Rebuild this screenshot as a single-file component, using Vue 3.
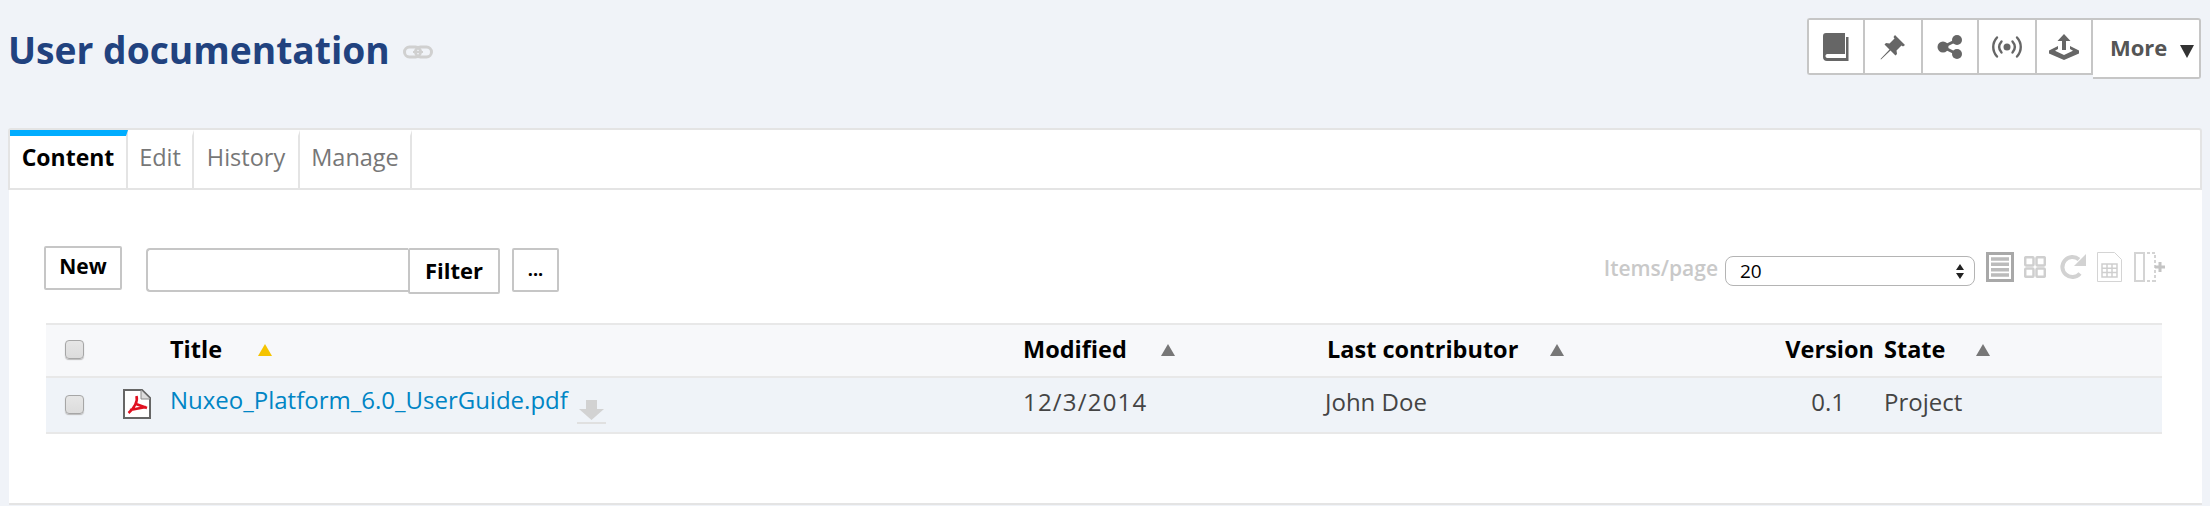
<template>
  <div class="page">
    <header class="doc-header">
      <h1 class="doc-title">
        User documentation
        <svg class="link-icon" viewBox="0 0 30 14" width="30" height="14">
          <rect x="1.5" y="2" width="16" height="10" rx="5" fill="none" stroke="#d0d0d0" stroke-width="3" />
          <rect x="12.5" y="2" width="16" height="10" rx="5" fill="none" stroke="#d0d0d0" stroke-width="3" />
          <rect x="10" y="6" width="10" height="2" fill="#d0d0d0" />
        </svg>
      </h1>
      <div class="actions">
        <div class="action-group">
          <button class="action-btn">
            <svg viewBox="0 0 26 28" width="26" height="28">
              <path fill="#666" d="M3 0h19v21H5c-1.500 0-2.500.6-2.500 2s1 2 2.500 2h18V4h2.500v24H4c-2.500 0-4-1.500-4-4V3c0-2 1-3 3-3z" />
            </svg>
          </button>
          <button class="action-btn">
            <svg viewBox="0 0 26 26" width="26" height="26">
              <path fill="#666" d="M15 1l10 10-2 1.500-1.500-1-5 5 .5 3.500-1.500 1.500-5-5-9.500 9-.5-.5 9-9.500-5-5L6 9l3.500.5 5-5-1-1.500z" />
            </svg>
          </button>
          <button class="action-btn">
            <svg viewBox="0 0 26 26" width="26" height="26">
              <path d="M20 6L6 13l14 7" fill="none" stroke="#666" stroke-width="3" />
              <circle cx="20" cy="6" r="5" fill="#666" />
              <circle cx="6" cy="13" r="5.500" fill="#666" />
              <circle cx="20" cy="20" r="5" fill="#666" />
            </svg>
          </button>
          <button class="action-btn">
            <svg viewBox="0 0 30 24" width="30" height="24">
              <circle cx="15" cy="12" r="3.500" fill="#666" />
              <path d="M9.500 6.500c-3 3.500-3 7.500 0 11M20.500 6.500c3 3.500 3 7.500 0 11M5 2.500c-5 5.500-5 13.500 0 19M25 2.500c5 5.500 5 13.500 0 19" fill="none" stroke="#666" stroke-width="2.400" stroke-linecap="round" />
            </svg>
          </button>
          <button class="action-btn">
            <svg viewBox="0 0 30 26" width="30" height="26">
              <path fill="#666" d="M15 0l6.500 7H17v9h-4V7H8.500z" />
              <path fill="#666" d="M9 12v3L6 16.800 15 21l9-4.200L21 15v-3l9 4.500V19.500L15 26 0 19.500v-3z" />
            </svg>
          </button>
        </div>
        <button class="more-btn">
          More
          <svg viewBox="0 0 14 13" width="14" height="13">
            <path d="M0 0h14L7 13z" fill="#333" />
          </svg>
        </button>
      </div>
    </header>

    <nav class="tabs">
      <a
        v-for="tab in tabs"
        :key="tab.label"
        class="tab"
        :class="{ active: tab.active }"
        :style="{ width: tab.width + 'px' }"
      >{{ tab.label }}</a>
    </nav>

    <main class="panel">
      <div class="toolbar">
        <div class="toolbar-left">
          <button class="btn btn-new">New</button>
          <div class="filter">
            <div class="filter-input"></div>
            <button class="btn btn-filter">Filter</button>
          </div>
          <button class="btn btn-more">...</button>
        </div>
        <div class="toolbar-right">
          <span class="items-label">Items/page</span>
          <div class="page-select">
            <span>20</span>
            <svg viewBox="0 0 8 15" width="8" height="15">
              <path d="M4 0l4 6H0zM4 15L0 9h8z" fill="#222" />
            </svg>
          </div>
          <div class="view-icons">
            <svg viewBox="0 0 28 30" width="28" height="30">
              <rect x="1.500" y="1.500" width="25" height="27" fill="#fff" stroke="#a8a8a8" stroke-width="3" />
              <path d="M5 7h18M5 12.300h18M5 17.700h18M5 23h18" stroke="#bbb" stroke-width="3.600" />
            </svg>
            <svg viewBox="0 0 22 22" width="22" height="22">
              <g fill="none" stroke="#cfcfcf" stroke-width="2.500">
                <rect x="1.200" y="1.200" width="8.300" height="8.300" rx="1" />
                <rect x="12.500" y="1.200" width="8.300" height="8.300" rx="1" />
                <rect x="1.200" y="12.500" width="8.300" height="8.300" rx="1" />
                <rect x="12.500" y="12.500" width="8.300" height="8.300" rx="1" />
              </g>
            </svg>
            <svg viewBox="0 0 26 26" width="26" height="26">
              <path d="M20 19.500A10 10 0 1 1 19 5.500" fill="none" stroke="#d2d2d2" stroke-width="4" />
              <path d="M26 0v12H14z" fill="#d2d2d2" />
            </svg>
            <svg viewBox="0 0 25 30" width="25" height="30">
              <path d="M.5.5h17l7 7v22H.500z" fill="#fff" stroke="#d4d4d4" />
              <path d="M5 12h15v13H5zM5 16.300h15M5 20.600h15M10 12v13M15 12v13" fill="none" stroke="#cfcfcf" stroke-width="1.500" />
            </svg>
            <svg viewBox="0 0 31 30" width="31" height="30">
              <rect x="1" y="1" width="9" height="28" fill="none" stroke="#d4d4d4" stroke-width="2" />
              <path d="M13 1h8v29M13 29h8" fill="none" stroke="#d4d4d4" stroke-width="2" stroke-dasharray="3 2" />
              <path d="M21 13.500h3.500V10h3v3.500H31v3h-3.500V20h-3v-3.500H21z" fill="#c4c4c4" />
            </svg>
          </div>
        </div>
      </div>

      <table class="doc-table">
        <colgroup>
          <col style="width: 76px" />
          <col style="width: 48px" />
          <col style="width: 853px" />
          <col style="width: 304px" />
          <col style="width: 456px" />
          <col style="width: 101px" />
          <col />
        </colgroup>
        <thead>
          <tr>
            <th class="check-cell"><span class="checkbox"></span></th>
            <th></th>
            <th>Title<span class="sort sort-on"></span></th>
            <th>Modified<span class="sort"></span></th>
            <th>Last contributor<span class="sort sort-last"></span></th>
            <th class="version">Version</th>
            <th>State<span class="sort sort-state"></span></th>
          </tr>
        </thead>
        <tbody>
          <tr v-for="doc in docs" :key="doc.title">
            <td class="check-cell"><span class="checkbox"></span></td>
            <td class="icon-cell">
              <svg viewBox="0 0 28 30" width="28" height="30">
                <path d="M1 1h18l8 8v20H1z" fill="#fff" stroke="#666" stroke-width="2" />
                <path d="M18 1v9h9" fill="#ddd" stroke="#888" />
                <path d="M13.500 7c1.500 5-2 12-8 17M13 15l11 4M7 21l16-3" fill="none" stroke="#e01020" stroke-width="2.600" />
              </svg>
            </td>
            <td class="title-cell">
              <a class="doc-link">{{ doc.title }}</a>
              <svg class="download" viewBox="0 0 29 24" width="29" height="24">
                <path d="M9 0h11v9h7L14.500 20 2 9h7z" fill="#d2d2d2" />
                <rect y="22" width="29" height="2" fill="#e0e0e0" />
              </svg>
            </td>
            <td class="date">{{ doc.modified }}</td>
            <td class="contributor">{{ doc.contributor }}</td>
            <td class="version version-value">{{ doc.version }}</td>
            <td>{{ doc.state }}</td>
          </tr>
        </tbody>
      </table>
    </main>
  </div>
</template>

<script setup>
const tabs = [
  { label: 'Content', width: 118, active: true },
  { label: 'Edit', width: 66 },
  { label: 'History', width: 106 },
  { label: 'Manage', width: 112 }
]

const docs = [
  {
    title: 'Nuxeo_Platform_6.0_UserGuide.pdf',
    modified: '12/3/2014',
    contributor: 'John Doe',
    version: '0.1',
    state: 'Project'
  }
]
</script>

<style>
html,
body {
  margin: 0;
  background: #f0f3f8;
}
</style>

<style scoped>
.page {
  width: 2210px;
  height: 506px;
  padding: 0 8px;
  box-sizing: border-box;
  overflow: hidden;
  font-family: "Open Sans", "Liberation Sans", sans-serif;
  color: #444;
}

.doc-header {
  display: flex;
  justify-content: space-between;
  align-items: flex-start;
  height: 128px;
  padding-top: 18px;
  box-sizing: border-box;
}

.doc-title {
  display: flex;
  align-items: center;
  gap: 13px;
  margin: 8px 0 0;
  font-size: 37.2px;
  line-height: 48px;
  font-weight: 700;
  color: #21427f;
}

.link-icon {
  margin-top: 4px;
}

.actions {
  display: flex;
  align-items: flex-start;
  margin-right: 1px;
}

.action-group {
  display: grid;
  grid-template-columns: 56px 58px 56px 58px 56px;
  height: 57px;
  box-sizing: border-box;
  border: 2px solid #c6c6c6;
  border-right: 0;
  border-radius: 3px 0 0 3px;
  background: #fff;
}

.action-btn {
  display: flex;
  align-items: center;
  justify-content: center;
  padding: 0;
  border: 0;
  border-right: 2px solid #c6c6c6;
  background: #fff;
}

.more-btn {
  display: flex;
  align-items: flex-start;
  gap: 13px;
  width: 108px;
  height: 61px;
  padding: 12px 0 0 17px;
  box-sizing: border-box;
  border: 2px solid #c6c6c6;
  border-width: 2px 2px 2px 0;
  border-radius: 0 3px 3px 0;
  background: #fff;
  font: 700 22px/30px "Open Sans", sans-serif;
  color: #555;
}

.more-btn svg {
  margin-top: 13px;
}

.tabs {
  display: flex;
  height: 62px;
  box-sizing: border-box;
  border: 2px solid #e4e4e4;
  border-radius: 3px 3px 0 0;
  background: #fff;
}

.tab {
  box-sizing: border-box;
  padding-top: 4px;
  border-right: 2px solid #e4e4e4;
  border-top: 6px solid transparent;
  font-size: 23.5px;
  line-height: 34px;
  text-align: center;
  color: #777;
}

.tab.active {
  border-top-color: #00adff;
  font-size: 23px;
  font-weight: 700;
  color: #000;
}

.panel {
  height: 315px;
  margin-left: 1px;
  padding: 56px 38px 0 37px;
  box-sizing: border-box;
  background: #fff;
  border-bottom: 2px solid #e4e4e4;
}

.toolbar {
  display: flex;
  justify-content: space-between;
  height: 77px;
}

.toolbar-left {
  display: flex;
  align-items: flex-start;
}

.btn {
  box-sizing: border-box;
  padding: 0 0 2px;
  border: 2px solid #c6c6c6;
  border-radius: 2px;
  background: #fff;
  font: 700 22px "Open Sans", sans-serif;
  color: #000;
}

.btn-new {
  width: 78px;
  height: 44px;
  margin-left: -2px;
  font-size: 21px;
  padding-bottom: 4px;
}

.filter {
  display: flex;
  align-items: flex-start;
  margin: 2px 0 0 24px;
}

.filter-input {
  width: 262px;
  height: 44px;
  box-sizing: border-box;
  border: 2px solid #c6c6c6;
  border-right: 0;
  border-radius: 4px 0 0 4px;
}

.btn-filter {
  width: 92px;
  height: 46px;
}

.btn-more {
  width: 47px;
  height: 44px;
  margin: 2px 0 0 12px;
  font-size: 18px;
}

.toolbar-right {
  display: flex;
  align-items: flex-start;
  margin-top: 10px;
  margin-right: -1px;
}

.items-label {
  margin: 0 7px 0 0;
  font-size: 21px;
  line-height: 24px;
  font-weight: 600;
  color: #c9c9c9;
}

.page-select {
  display: flex;
  align-items: center;
  justify-content: space-between;
  width: 250px;
  height: 30px;
  box-sizing: border-box;
  padding: 0 10px 0 14px;
  border: 1px solid #b4b4b4;
  border-radius: 8px;
  font-size: 19px;
  color: #000;
}

.view-icons {
  display: flex;
  align-items: center;
  gap: 10px;
  height: 30px;
  margin: -4px 0 0 11px;
}

.view-icons svg:nth-child(3) {
  margin-left: 4px;
}

.view-icons svg:nth-child(4) {
  margin-left: 1px;
}

.view-icons svg:nth-child(5) {
  margin-left: 2px;
}

.doc-table {
  width: 2116px;
  table-layout: fixed;
  border-collapse: separate;
  border-spacing: 0;
  font-size: 24px;
}

.doc-table th,
.doc-table td {
  padding: 0;
  text-align: left;
  white-space: nowrap;
  box-sizing: border-box;
}

.doc-table th {
  height: 55px;
  padding-bottom: 4px;
  border-top: 2px solid #e8e8e8;
  border-bottom: 2px solid #e8e8e8;
  background: #f7f8fa;
  font-size: 23.5px;
  font-weight: 700;
  color: #000;
}

.doc-table td {
  height: 56px;
  padding-bottom: 8px;
  border-bottom: 2px solid #e8e8e8;
  background: #eff3f8;
  color: #444;
}

.doc-table .check-cell {
  padding: 0 0 2px 19px;
  vertical-align: middle;
}

.checkbox {
  display: block;
  width: 19px;
  height: 19px;
  box-sizing: border-box;
  border: 1px solid #a6a6a6;
  border-radius: 4px;
  background: linear-gradient(#e6e6e6, #dcdcdc);
  box-shadow: 0 1px 1px #bbb;
}

.icon-cell svg {
  display: block;
  margin: 5px 0 0 1px;
}

.doc-table .title-cell {
  padding-bottom: 4px;
}

.doc-link {
  color: #0085c5;
}

.download {
  margin-left: 9px;
  vertical-align: -15px;
}

.sort {
  display: inline-block;
  margin-left: 34px;
  width: 0;
  height: 0;
  vertical-align: 2px;
  border-left: 7px solid transparent;
  border-right: 7px solid transparent;
  border-bottom: 12px solid #777;
}

.sort-on {
  margin-left: 36px;
  border-bottom-color: #f5c400;
}

.sort-last {
  margin-left: 32px;
}

.sort-state {
  margin-left: 31px;
}

.date {
  letter-spacing: 1.2px;
}

.contributor {
  text-indent: -2px;
}

.doc-table .version {
  text-align: right;
  padding-right: 10px;
}

.doc-table .version-value {
  padding-right: 39px;
}
</style>
